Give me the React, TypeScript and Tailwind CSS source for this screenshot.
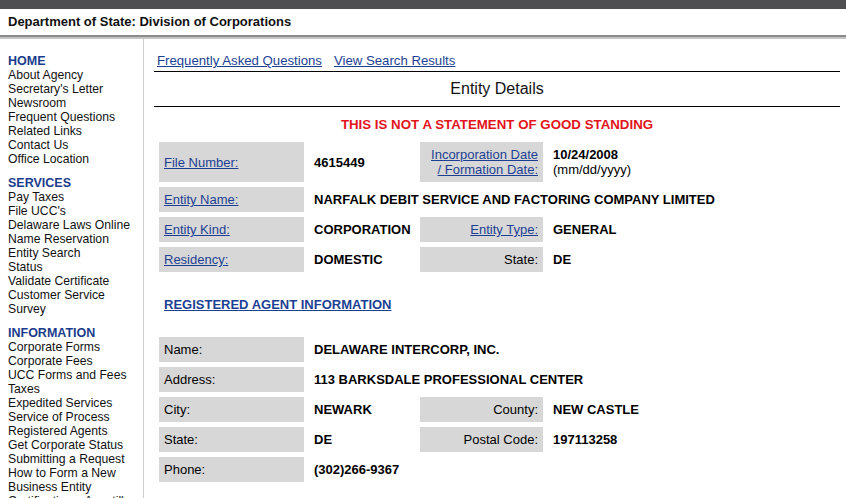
const home = ["About Agency", "Secretary's Letter", "Newsroom", "Frequent Questions", "Related Links", "Contact Us", "Office Location"];
const services = ["Pay Taxes", "File UCC's", "Delaware Laws Online", "Name Reservation", "Entity Search", "Status", "Validate Certificate", "Customer Service", "Survey"];
const information = ["Corporate Forms", "Corporate Fees", "UCC Forms and Fees", "Taxes", "Expedited Services", "Service of Process", "Registered Agents", "Get Corporate Status", "Submitting a Request", "How to Form a New", "Business Entity", "Certifications, Apostilles"];

function NavGroup({ title, items }: { title: string; items: string[] }) {
  return (
    <div className="mb-[10px]">
      <div className="font-bold text-[#1b3c8c] text-[12.5px]">{title}</div>
      {items.map((item) => (
        <div key={item} className="text-[#111] whitespace-nowrap">{item}</div>
      ))}
    </div>
  );
}

const label = "bg-[#d7d7d7] px-[5px] flex items-center";
const value = "px-[5px] flex items-center font-bold text-black whitespace-nowrap";
const linkCls = "text-[#1c3f94] underline";

export default function App() {
  return (
    <div className="w-[846px] h-[498px] overflow-hidden bg-white font-['Liberation_Sans',Arial,sans-serif] text-[12.2px] leading-[14px]">
      {/* Top bar + title */}
      <div className="h-[9px] bg-[#4f4f51]" />
      <div className="h-[26px] flex items-center pl-2 text-[13px] font-bold text-[#111]">
        Department of State: Division of Corporations
      </div>
      <div className="h-[2px] bg-[#8a8a8a]" />
      <div className="h-[2px] bg-[#c4c4c4]" />

      <div className="flex">
        {/* Sidebar */}
        <div className="w-[144px] shrink-0 border-r border-[#cfcfcf] pl-2 pt-[15px] h-[500px]">
          <NavGroup title="HOME" items={home} />
          <NavGroup title="SERVICES" items={services} />
          <NavGroup title="INFORMATION" items={information} />
        </div>

        {/* Main */}
        <div className="pl-[10px] pt-[14px] w-[696px]">
          <div className="border-b border-black pl-[3px] pb-[3px] flex gap-[12px] text-[13.2px] leading-[15px]">
            <a className={linkCls}>Frequently Asked Questions</a>
            <a className={linkCls}>View Search Results</a>
          </div>
          <div className="h-[35px] flex items-center justify-center border-b border-black text-[16px] text-[#111]">
            Entity Details
          </div>
          <div className="mt-[10px] text-center text-[#e3131b] font-bold text-[13.3px] leading-[15px]">
            THIS IS NOT A STATEMENT OF GOOD STANDING
          </div>

          {/* Entity table */}
          <div className="mt-[5px] p-[5px] grid grid-cols-[145px_106px_123px_1fr] grid-rows-[40px_25px_25px_25px] gap-[5px] text-[13px] leading-[15px]">
            <div className={label}>
              <a className={linkCls}>File Number:</a>
            </div>
            <div className={value}>4615449</div>
            <div className={`${label} justify-end text-right`}>
              <a className={linkCls}>
                Incorporation Date
                <br />/ Formation Date:
              </a>
            </div>
            <div className="px-[5px] flex flex-col justify-center text-black">
              <span className="font-bold">10/24/2008</span>
              <span>(mm/dd/yyyy)</span>
            </div>

            <div className={label}>
              <a className={linkCls}>Entity Name:</a>
            </div>
            <div className={`${value} col-span-3`}>
              NARFALK DEBIT SERVICE AND FACTORING COMPANY LIMITED
            </div>

            <div className={label}>
              <a className={linkCls}>Entity Kind:</a>
            </div>
            <div className={value}>CORPORATION</div>
            <div className={`${label} justify-end`}>
              <a className={linkCls}>Entity Type:</a>
            </div>
            <div className={value}>GENERAL</div>

            <div className={label}>
              <a className={linkCls}>Residency:</a>
            </div>
            <div className={value}>DOMESTIC</div>
            <div className={`${label} justify-end text-black`}>State:</div>
            <div className={value}>DE</div>
          </div>

          <div className="mt-[20px] pl-[10px] text-[13px] leading-[15px] font-bold">
            <a className={linkCls}>REGISTERED AGENT INFORMATION</a>
          </div>

          {/* Agent table */}
          <div className="mt-[20px] p-[5px] grid grid-cols-[145px_106px_123px_1fr] auto-rows-[25px] gap-[5px] text-[13px] leading-[15px] text-black">
            <div className={label}>Name:</div>
            <div className={`${value} col-span-3`}>DELAWARE INTERCORP, INC.</div>

            <div className={label}>Address:</div>
            <div className={`${value} col-span-3`}>113 BARKSDALE PROFESSIONAL CENTER</div>

            <div className={label}>City:</div>
            <div className={value}>NEWARK</div>
            <div className={`${label} justify-end`}>County:</div>
            <div className={value}>NEW CASTLE</div>

            <div className={label}>State:</div>
            <div className={value}>DE</div>
            <div className={`${label} justify-end`}>Postal Code:</div>
            <div className={value}>197113258</div>

            <div className={label}>Phone:</div>
            <div className={`${value} col-span-3`}>(302)266-9367</div>
          </div>
        </div>
      </div>
    </div>
  );
}
